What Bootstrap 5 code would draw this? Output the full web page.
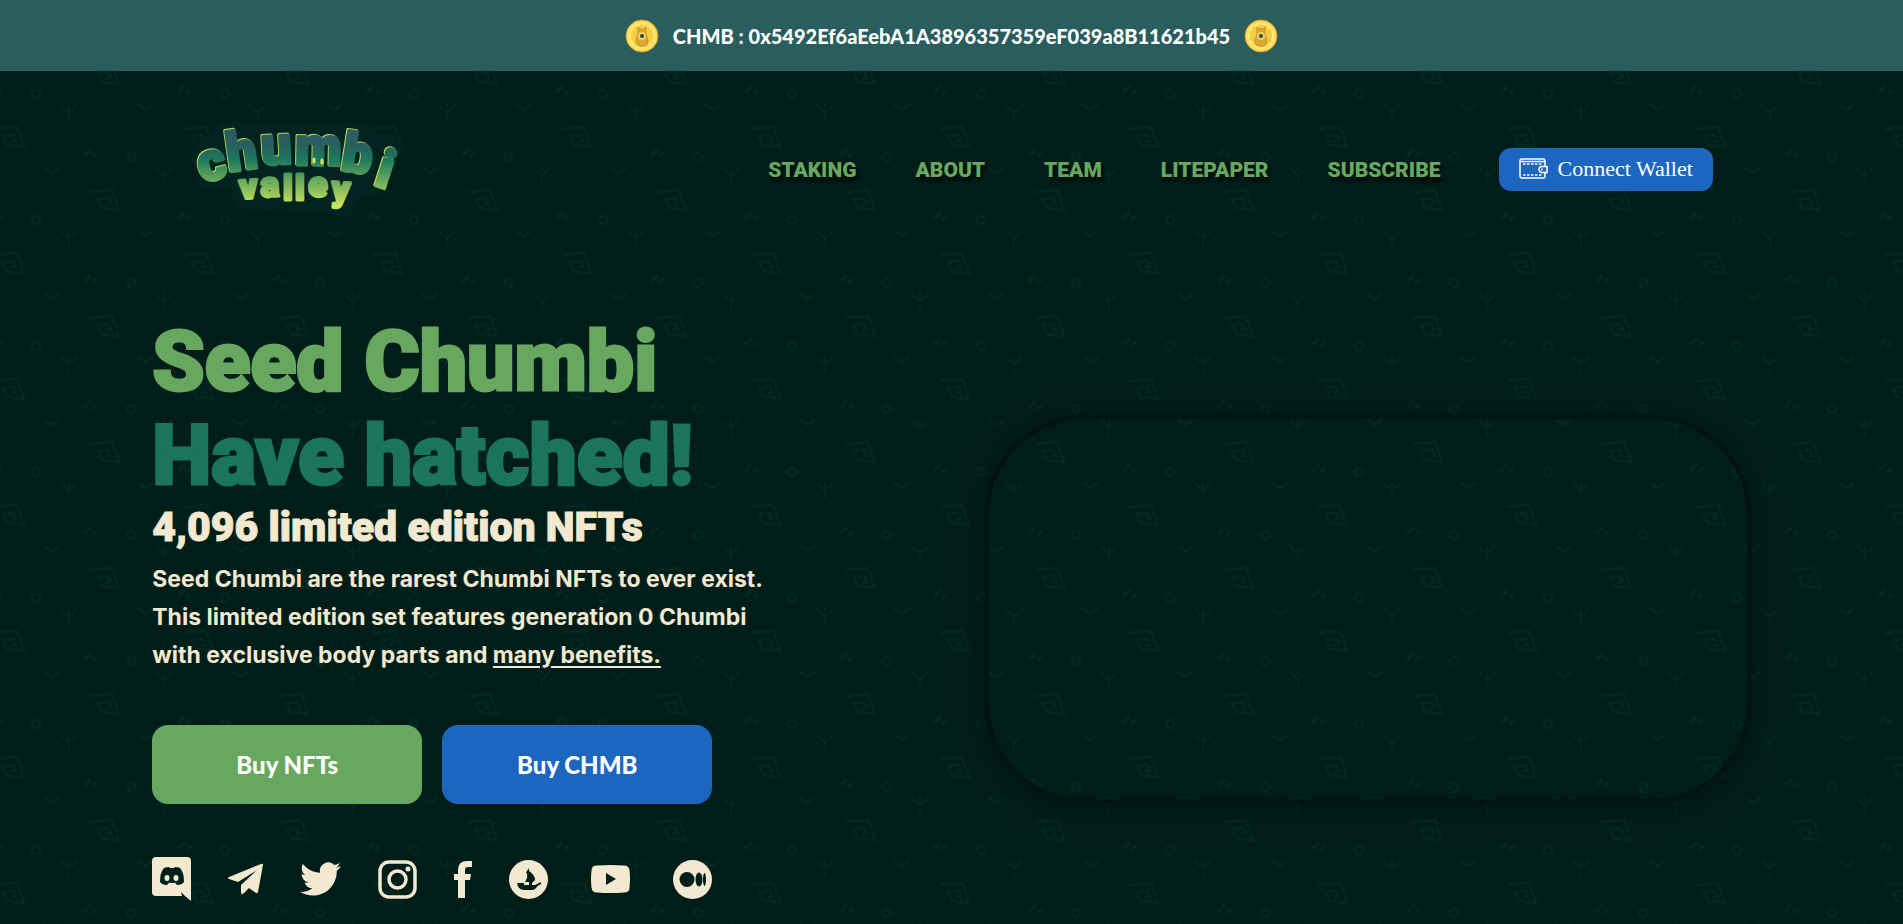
<!DOCTYPE html>
<html lang="en">
<head>
<meta charset="utf-8">
<meta name="viewport" content="width=device-width, initial-scale=1">
<title>Chumbi Valley</title>
<link rel="stylesheet" href="https://cdn.jsdelivr.net/npm/bootstrap@5.3.0/dist/css/bootstrap.min.css">
<style>
:root { --leaf:#68a75f; --pine:#1b755c; --cream:#f2e9d0; --blue:#1d66c0; --night:#001e19; }
body {
  background-color: var(--night);
  background-image: url("data:image/svg+xml,%3Csvg xmlns='http://www.w3.org/2000/svg' width='189' height='126'%3E%3Cdefs%3E%3Cg id='m' fill='none' stroke='%23032620' stroke-width='3'%3E%3Cpath d='M90 66l22-2 7 20-17-2-4-9 11-1 2 6-5 0' stroke-width='3'/%3E%3Cpath d='M84 30l7-7M92 31l5-4' stroke-width='4'/%3E%3Ccircle cx='131' cy='31' r='4'/%3E%3Cpath d='M44 42l8 5 7-5'/%3E%3Cpath d='M156 42l8 8 8-8M164 41v17' stroke-width='2'/%3E%3C/g%3E%3C/defs%3E%3Cuse href='%23m'/%3E%3Cuse href='%23m' x='94' y='-63'/%3E%3Cuse href='%23m' x='-95' y='-63'/%3E%3Cuse href='%23m' x='94' y='63'/%3E%3Cuse href='%23m' x='-95' y='63'/%3E%3C/svg%3E");
  color: var(--cream);
  font-family: Lato, "Liberation Sans", sans-serif;
  font-weight: 700;
}
.token-bar { background: #2a5d5d; height: 71px; color: #fff; font-size: 20px; font-weight: 900; gap: 13px; }
.page-inset { padding-left: 8%; padding-right: 8%; }
.site-nav { padding-top: 39px; }
.brand-logo { width: 240px; height: 118px; margin-left: 28px; overflow: visible; }
.menu-links { gap: 59px; margin-right: 38px; }
.menu-links a { color: var(--leaf); font: 900 21px/32px Roboto, sans-serif; text-decoration: none; text-shadow: 2px 4px 4px #000c; padding-top: 2px; }
.wallet-btn { background: var(--blue); color: #fff; border-radius: 12px; height: 43px; padding: 0 20px; font: 400 22px/32px "Liberation Serif", serif; }
.hero-copy { padding-top: 87px; }
.hero-title { font: 900 84px/94px Roboto, sans-serif; color: var(--leaf); margin: 0; -webkit-text-stroke: 3px currentColor; }
.hero-title span { color: var(--pine); }
.hero-sub { font: 900 41px/48px Roboto, sans-serif; margin: 0 0 9px; -webkit-text-stroke: 1px currentColor; }
.hero-text { font: 700 23px/38px Inter, sans-serif; margin-bottom: 51px; }
.hero-text a { color: inherit; text-underline-offset: 3px; }
.buy-row { gap: 20px; }
.buy-btn { width: 270px; height: 79px; border-radius: 16px; color: #fff; font-size: 24px; font-weight: 900; }
.buy-nft { background: var(--leaf); }
.buy-token { background: var(--blue); }
.wallet-btn:hover, .buy-btn:hover { color: #fff; background: #14509b; }
.socials { width: 560px; margin-top: 53px; }
.socials a { color: var(--cream); line-height: 0; }
.socials svg { fill: currentColor; }
.hero-media { padding: 191px 4px 0 37px; }
.video-frame { height: 380px; border-radius: 96px; box-shadow: 0 0 0 4px #001511, 0 4px 28px 4px #0006; }
</style>
</head>
<body>
<div class="token-bar d-flex align-items-center justify-content-center">
  <svg width="36" height="36" viewBox="0 0 36 36" aria-hidden="true"><g id="coin"><circle cx="18" cy="18" r="16" fill="#ffe05c" stroke="#d99a2b" stroke-width="1"/><circle cx="18" cy="18" r="12" fill="#f7cd43" stroke="#ffeb7c" stroke-width="2" stroke-dasharray="5 2"/><path d="M14 9l2 2h4l2-2v7l2 6q0 5-3 6h-6q-3-1-3-6l2-6z" fill="#dba833" stroke="#c8942b"/><circle cx="18" cy="18" r="4" fill="#f3cf61"/><circle cx="18" cy="18" r="2" fill="#29483f"/></g></svg>
  <span>CHMB : 0x5492Ef6aEebA1A3896357359eF039a8B11621b45</span>
  <svg width="36" height="36" viewBox="0 0 36 36" aria-hidden="true"><use href="#coin"/></svg>
</div>

<header class="page-inset site-nav d-flex align-items-center justify-content-between">
  <a href="#" class="d-block" aria-label="Chumbi Valley home">
    <svg class="brand-logo d-block" viewBox="0 0 240 118">
      <defs><linearGradient id="logoFill" gradientUnits="userSpaceOnUse" x1="0" y1="18" x2="0" y2="97"><stop offset="0" stop-color="#2c5c62"/><stop offset=".22" stop-color="#27605f"/><stop offset=".4" stop-color="#1c785d"/><stop offset=".65" stop-color="#65a65d"/><stop offset="1" stop-color="#cce75a"/></linearGradient></defs>
      <path d="M20 48L46 20 110 24 182 20 212 40 200 76 174 80 164 98 150 94 64 90 56 72 28 70z" fill="#02231f" stroke="#02231f" stroke-width="18" stroke-linejoin="round"/>
      <g fill="url(#logoFill)" stroke="url(#logoFill)" stroke-width="3" stroke-linejoin="round" font-family="Roboto, sans-serif" font-weight="900">
        <text font-size="54" x="22 49 82 115 160 193" y="73 62 55 55 60 75" rotate="-14 -8 -3 1 9 18" style="filter:drop-shadow(-1px -1px 0 #b4d64f)">chumbi</text>
        <text font-size="35" x="60 81 103 115 128 151" y="89 87 90 90 86 90" rotate="-4 -3 0 0 2 4">valley</text>
      </g>
      <path d="M134 49v3M142 50v3" stroke="#d5e65a" stroke-width="3" stroke-linecap="round"/>
    </svg>
  </a>
  <nav class="menu-links d-flex align-items-center" aria-label="Main">
    <a href="#">STAKING</a><a href="#">ABOUT</a><a href="#">TEAM</a><a href="#">LITEPAPER</a><a href="#">SUBSCRIBE</a>
    <button type="button" class="btn wallet-btn d-flex align-items-center border-0">
      <svg class="me-2" width="30" height="22" viewBox="0 0 30 22" fill="none" stroke="#fff" stroke-width="1.5" aria-hidden="true"><rect x="1" y="1" width="25" height="19" rx="2"/><path d="M1 3.500h25"/><path d="M4 6h20M4 17h20" stroke-dasharray="2.500 1.500"/><path d="M28 8.500h-5q-3 0-3 3t3 3h5z" fill="#1d66c0"/><path d="M23 10.500v2"/></svg>
      Connect Wallet
    </button>
  </nav>
</header>

<main class="page-inset">
  <div class="row g-0">
    <section class="col-6 hero-copy">
      <h1 class="hero-title">Seed Chumbi<br><span>Have hatched!</span></h1>
      <h2 class="hero-sub">4,096 limited edition NFTs</h2>
      <p class="hero-text">Seed Chumbi are the rarest Chumbi NFTs to ever exist.<br>This limited edition set features generation 0 Chumbi<br>with exclusive body parts and <a href="#">many benefits.</a></p>
      <div class="d-flex buy-row">
        <button type="button" class="btn buy-btn buy-nft border-0">Buy NFTs</button>
        <button type="button" class="btn buy-btn buy-token border-0">Buy CHMB</button>
      </div>
      <div class="socials d-flex align-items-center justify-content-between">
        <a href="#" aria-label="Discord"><svg width="39" height="44" viewBox="0 0 39 44"><path d="M4 0h31q4 0 4 4v40l-6-5-4-4 1 4H4q-4 0-4-4V4q0-4 4-4z"/><path fill="#001e19" d="M12 11q3-1 5-1l1 1h4l1-1q3 0 5 1 4 4 4 14-2 3-7 3l-2-2 3-1q-6 2-12 0l3 1-2 2q-5 0-7-3 0-10 4-14z"/><ellipse cx="15" cy="21" rx="2.500" ry="3"/><ellipse cx="24" cy="21" rx="2.500" ry="3"/></svg></a>
        <a href="#" aria-label="Telegram"><svg width="35" height="32" viewBox="0 0 35 32"><path d="M33 1q2-1 2 1l-5 27q-1 2-2 1l-7-5-5 5q-3 3-3-1v-7L29 7 10 19 1 16q-2-1 0-2z"/></svg></a>
        <a href="#" aria-label="Twitter"><svg width="41" height="34" viewBox="0 0 24 20"><path d="M23.953 2.570a10 10 0 0 1-2.825.775 4.958 4.958 0 0 0 2.163-2.723c-.951.555-2.005.959-3.127 1.184a4.920 4.920 0 0 0-8.384 4.482C7.690 6.095 4.067 4.130 1.640 1.162a4.822 4.822 0 0 0-.666 2.475c0 1.710.87 3.213 2.188 4.096a4.904 4.904 0 0 1-2.228-.616v.06a4.923 4.923 0 0 0 3.946 4.827 4.996 4.996 0 0 1-2.212.085 4.936 4.936 0 0 0 4.604 3.417A9.867 9.867 0 0 1 0 17.540a13.995 13.995 0 0 0 7.557 2.209c9.053 0 13.998-7.496 13.998-13.985 0-.21 0-.42-.015-.63A9.935 9.935 0 0 0 24 2.590z"/></svg></a>
        <a href="#" aria-label="Instagram"><svg width="39" height="39" viewBox="0 0 39 39"><g fill="none" stroke="currentColor" stroke-width="3.500"><rect x="2" y="2" width="35" height="35" rx="9"/><circle cx="19.500" cy="19.500" r="8.500"/></g><circle cx="30" cy="9" r="2.500"/></svg></a>
        <a href="#" aria-label="Facebook"><svg width="18" height="37" viewBox="0 0 18 37"><path d="M4 37V19H0v-6h4V9q0-9 9-9h5v6h-4q-3 0-3 3v4h6l-1 6h-5v18z"/></svg></a>
        <a href="#" aria-label="OpenSea"><svg width="39" height="39" viewBox="0 0 39 39"><circle cx="19.500" cy="19.500" r="19.500"/><path fill="#001e19" d="M18 11l2-3v3q6 4 6 9l-3 3v2h3l6-3v2q-3 1-5 4-1 2-4 2H15q-6 0-7-7h7v2h5v-3h-4q4-6 1-10z"/></svg></a>
        <a href="#" aria-label="YouTube"><svg width="51" height="28" viewBox="0 0 51 28"><path fill-rule="evenodd" d="M12 0.500q13-1 27 0 5 0 5.500 5 1 8 0 17 0 5-5.500 5-13 1-27 0-5 0-5.500-5-1-8 0-17 0-5 5.500-5zM21 8v12l10-6z"/></svg></a>
        <a href="#" aria-label="Medium"><svg width="39" height="39" viewBox="0 0 39 39"><circle cx="19.500" cy="19.500" r="19.500"/><g fill="#001e19"><circle cx="14" cy="19.500" r="7.500"/><ellipse cx="26" cy="19.500" rx="3.500" ry="7"/><ellipse cx="31.500" cy="19.500" rx="1.500" ry="6.500"/></g></svg></a>
      </div>
    </section>
    <section class="col-6 hero-media"><div class="video-frame"></div></section>
  </div>
</main>
<script src="https://cdn.jsdelivr.net/npm/bootstrap@5.3.0/dist/js/bootstrap.bundle.min.js"></script>
</body>
</html>
